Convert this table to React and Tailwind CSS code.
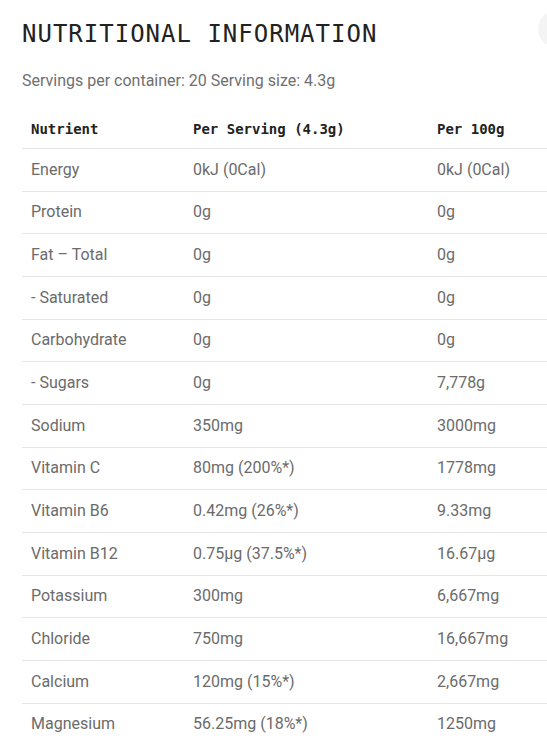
import React from "react";

const rows = [
  ["Energy", "0kJ (0Cal)", "0kJ (0Cal)"],
  ["Protein", "0g", "0g"],
  ["Fat – Total", "0g", "0g"],
  ["- Saturated", "0g", "0g"],
  ["Carbohydrate", "0g", "0g"],
  ["- Sugars", "0g", "7,778g"],
  ["Sodium", "350mg", "3000mg"],
  ["Vitamin C", "80mg (200%*)", "1778mg"],
  ["Vitamin B6", "0.42mg (26%*)", "9.33mg"],
  ["Vitamin B12", "0.75µg (37.5%*)", "16.67µg"],
  ["Potassium", "300mg", "6,667mg"],
  ["Chloride", "750mg", "16,667mg"],
  ["Calcium", "120mg (15%*)", "2,667mg"],
  ["Magnesium", "56.25mg (18%*)", "1250mg"],
];

export default function App() {
  return (
    <div className="relative w-[547px] h-[749px] overflow-hidden bg-white">
      <div className="absolute left-[538px] top-[11px] w-9 h-9 rounded-full bg-[#f4f4f4]" />
      <div className="pl-[22px] pt-[18px]">
        <h1 className="font-['DejaVu_Sans_Mono',monospace] text-[24px] leading-8 tracking-[1px] text-[#222] font-normal">
          NUTRITIONAL INFORMATION
        </h1>
        <p className="mt-[19px] font-['Roboto',sans-serif] text-[16px] leading-6 text-[#6f6f6f]">
          Servings per container: 20 Serving size: 4.3g
        </p>
        <div className="w-[560px]">
          <div className="flex pt-[26px] pb-[9px] font-['DejaVu_Sans_Mono',monospace] text-[14px] leading-5 font-semibold text-[#222]">
            <div className="w-[162px] pl-[9px]">Nutrient</div>
            <div className="w-[244px] pl-[9px]">Per Serving (4.3g)</div>
            <div className="pl-[9px]">Per 100g</div>
          </div>
          {rows.map((r) => (
            <div
              key={r[0]}
              className="flex items-center h-[42.67px] border-t border-[#e6e6e6] font-['Roboto',sans-serif] text-[16px] text-[#6b6b6b]"
            >
              <div className="w-[162px] pl-[9px]">{r[0]}</div>
              <div className="w-[244px] pl-[9px]">{r[1]}</div>
              <div className="pl-[9px]">{r[2]}</div>
            </div>
          ))}
        </div>
      </div>
    </div>
  );
}
